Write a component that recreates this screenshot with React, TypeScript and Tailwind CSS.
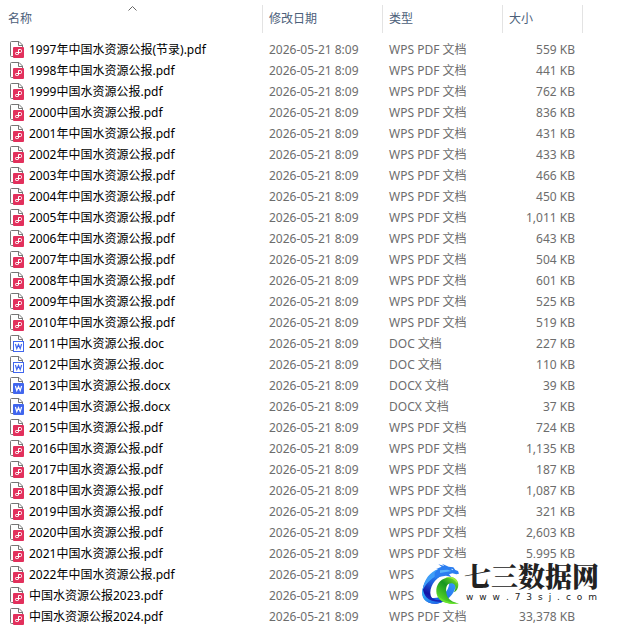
import React, { useState } from "react";

type FileKind = "pdf" | "doc" | "docx";

interface IFile {
  name: string;
  kind: FileKind;
  size?: number;
  type?: string;
}

const modified = "2026-05-21 8:09";

const typeNames: Record<FileKind, string> = {
  pdf: "WPS PDF 文档",
  doc: "DOC 文档",
  docx: "DOCX 文档",
};

const files: IFile[] = [
  { name: "1997年中国水资源公报(节录).pdf", kind: "pdf", size: 559 },
  { name: "1998年中国水资源公报.pdf", kind: "pdf", size: 441 },
  { name: "1999中国水资源公报.pdf", kind: "pdf", size: 762 },
  { name: "2000中国水资源公报.pdf", kind: "pdf", size: 836 },
  { name: "2001年中国水资源公报.pdf", kind: "pdf", size: 431 },
  { name: "2002年中国水资源公报.pdf", kind: "pdf", size: 433 },
  { name: "2003年中国水资源公报.pdf", kind: "pdf", size: 466 },
  { name: "2004年中国水资源公报.pdf", kind: "pdf", size: 450 },
  { name: "2005年中国水资源公报.pdf", kind: "pdf", size: 1011 },
  { name: "2006年中国水资源公报.pdf", kind: "pdf", size: 643 },
  { name: "2007年中国水资源公报.pdf", kind: "pdf", size: 504 },
  { name: "2008年中国水资源公报.pdf", kind: "pdf", size: 601 },
  { name: "2009年中国水资源公报.pdf", kind: "pdf", size: 525 },
  { name: "2010年中国水资源公报.pdf", kind: "pdf", size: 519 },
  { name: "2011中国水资源公报.doc", kind: "doc", size: 227 },
  { name: "2012中国水资源公报.doc", kind: "doc", size: 110 },
  { name: "2013中国水资源公报.docx", kind: "docx", size: 39 },
  { name: "2014中国水资源公报.docx", kind: "docx", size: 37 },
  { name: "2015中国水资源公报.pdf", kind: "pdf", size: 724 },
  { name: "2016中国水资源公报.pdf", kind: "pdf", size: 1135 },
  { name: "2017中国水资源公报.pdf", kind: "pdf", size: 187 },
  { name: "2018中国水资源公报.pdf", kind: "pdf", size: 1087 },
  { name: "2019中国水资源公报.pdf", kind: "pdf", size: 321 },
  { name: "2020中国水资源公报.pdf", kind: "pdf", size: 2603 },
  { name: "2021中国水资源公报.pdf", kind: "pdf", size: 5995 },
  { name: "2022年中国水资源公报.pdf", kind: "pdf", type: "WPS" },
  { name: "中国水资源公报2023.pdf", kind: "pdf", type: "WPS" },
  { name: "中国水资源公报2024.pdf", kind: "pdf", size: 33378 },
];

const FileIcon: React.FC<{ kind: FileKind }> = ({ kind }) => {
  return (
    <svg viewBox="0 0 16 17" className="h-[17px] w-4 shrink-0" fill="none">
      <path
        d="M4 15.5H2.5a1 1 0 0 1-1-1v-13a1 1 0 0 1 1-1H10L13.5 4v2M9.5.5v4h4"
        stroke="#767676"
      />
      {kind === "pdf" && (
        <>
          <rect x="4" y="6" width="11" height="11" rx="1" fill="#e2305c" />
          <path
            d="M9.5 13V8.5h2a1 1 0 0 1 1 1v1a1 1 0 0 1-1 1H7.2a.7.7 0 0 0-.7.7v.6a.7.7 0 0 0 .7.7h1.6a.7.7 0 0 0 .7-.7"
            stroke="#fff"
          />
        </>
      )}
      {kind === "doc" && (
        <>
          <rect x="4.5" y="6.5" width="10" height="10" fill="#fff" stroke="#4166ee" />
          <path d="M6.4 9l1.4 4.6 1.7-4 1.7 4L12.6 9" stroke="#4166ee" strokeWidth="1.2" />
        </>
      )}
      {kind === "docx" && (
        <>
          <rect x="4" y="6" width="11" height="11" rx="1" fill="#4166ee" />
          <path d="M6.4 9l1.4 4.6 1.7-4 1.7 4L12.6 9" stroke="#fff" strokeWidth="1.2" />
        </>
      )}
    </svg>
  );
};

const DragonLogo = () => {
  return (
    <svg viewBox="0 0 120 129" className="h-[43px] w-10 shrink-0">
      <defs>
        <linearGradient id="body" x1="0.6" y1="0" x2="0.3" y2="1">
          <stop offset="0" stopColor="#2f8df0" />
          <stop offset="0.4" stopColor="#1d62e0" />
          <stop offset="0.75" stopColor="#1414a4" />
          <stop offset="1" stopColor="#1a3fd0" />
        </linearGradient>
        <linearGradient id="rim" x1="0" y1="0" x2="1" y2="1">
          <stop offset="0" stopColor="#38c0fb" />
          <stop offset="1" stopColor="#1a5be6" />
        </linearGradient>
        <linearGradient id="ring" x1="1" y1="0" x2="0" y2="1">
          <stop offset="0" stopColor="#3b9cf8" />
          <stop offset="0.6" stopColor="#1f6dee" />
          <stop offset="1" stopColor="#1638c4" />
        </linearGradient>
        <linearGradient id="tail" x1="1" y1="0.1" x2="0.3" y2="1">
          <stop offset="0" stopColor="#86e82c" />
          <stop offset="0.45" stopColor="#16951f" />
          <stop offset="1" stopColor="#5fdc2a" />
        </linearGradient>
      </defs>
      <path
        d="M108 58c3 30-22 62-58 67-16 1-26-3-32-10l14-8c26 6 54-14 56-45z"
        fill="url(#ring)"
      />
      <path
        d="M60 22C30 30 8 60 7 92c0 20 16 33 38 32 12-1 22-4 28-10-20 3-38 0-41-14C27 80 42 48 72 38z"
        fill="url(#body)"
      />
      <path d="M8 78c-5 20 0 40 24 46 12 3 26 1 36-5-20 2-38-1-49-13C13 98 10 90 8 78z" fill="url(#rim)" />
      <path d="M54 22C32 29 12 51 8 84c13-24 30-40 54-46z" fill="#3f9ef8" />
      <path
        d="M44 32l11-12-7 1 17-7-10-7 18 5-7-7 20 9 14 2 6 8 8 3 3 8-8 2-12-3-10 3 7 8-16-4-18 3-16 6z"
        fill="#2b7df0"
      />
      <path d="M60 25l22-2 13 4-13 2-22 4z" fill="#58b4fb" />
      <path d="M93 20l7 2-3 3z" fill="#d5efff" />
      <path
        d="M115 68c-1-17-17-27-36-21-20 6-31 22-30 42 2 25 23 39 68 35-18-3-35-11-38-32-3-17 3-28 14-28 9 0 14 6 13 14 0 5-2 9-5 13 9-3 14-12 14-23z"
        fill="url(#tail)"
      />
      <path d="M49 88c4 20 22 32 68 36-33 6-64-3-68-36z" fill="#68e42d" />
      <path d="M112 57c-8-13-24-15-37-8 16-3 28 2 36 15z" fill="#9aeb3c" />
    </svg>
  );
};

const Watermark = () => {
  return (
    <div className="absolute right-6 bottom-5 flex items-center bg-white px-1">
      <DragonLogo />
      <div className="py-0.5 pl-1 text-[#222]">
        <div className="font-[Noto_Serif_CJK_SC,Noto_Sans_CJK_SC,serif] text-[27px] leading-8 font-black">
          七三数据网
        </div>
        <div className="px-0.5 pb-1 font-[DejaVu_Sans,sans-serif] text-[9px] leading-2.5 [text-align-last:justify]">
          w w w . 7 3 s j . c o m
        </div>
      </div>
    </div>
  );
};

const App = () => {
  const [ascending, setAscending] = useState(true);

  const rows = ascending ? files : [...files].reverse();

  return (
    <main className="relative min-h-[628px] bg-white font-[Noto_Sans,Noto_Sans_CJK_SC,sans-serif] text-xs text-[#6d6d6d]">
      <table className="w-full table-fixed border-collapse">
        <colgroup>
          <col className="w-[262px]" />
          <col className="w-[120px]" />
          <col className="w-[120px]" />
          <col className="w-20" />
          <col />
        </colgroup>
        <thead>
          <tr className="h-[39px] text-left align-top text-[#4c607a]">
            <th className="relative pt-[5px] font-normal">
              <button
                className="flex h-7 w-full items-center pl-2"
                onClick={() => setAscending(!ascending)}
              >
                名称
              </button>
              <svg
                viewBox="0 0 9 5"
                className={
                  ascending
                    ? "absolute top-1.5 left-32 h-[5px] w-[9px]"
                    : "absolute top-1.5 left-32 h-[5px] w-[9px] rotate-180"
                }
              >
                <path d="M.5 4.5l4-4 4 4" fill="none" stroke="#666" />
              </svg>
            </th>
            {["修改日期", "类型", "大小"].map((title) => (
              <th key={title} className="pt-[5px] font-normal">
                <button className="flex h-7 w-full items-center border-l border-[#e3e3e3] pl-1.5">
                  {title}
                </button>
              </th>
            ))}
            <td className="pt-[5px]">
              <div className="h-7 border-l border-[#e3e3e3]" />
            </td>
          </tr>
        </thead>
        <tbody>
          {rows.map((file) => (
            <tr key={file.name} className="h-[21px] leading-5 whitespace-nowrap">
              <td className="p-0">
                <div className="flex h-[21px] items-center gap-1 pl-[9px] text-black">
                  <FileIcon kind={file.kind} />
                  <span>{file.name}</span>
                </div>
              </td>
              <td className="p-0 pl-[7px]">{modified}</td>
              <td className="p-0 pl-[7px]">{file.type ?? typeNames[file.kind]}</td>
              <td className="p-0 pr-[7px] text-right">
                {file.size && `${file.size.toLocaleString("en-US")} KB`}
              </td>
              <td className="p-0" />
            </tr>
          ))}
        </tbody>
      </table>
      <Watermark />
    </main>
  );
};

export default App;
